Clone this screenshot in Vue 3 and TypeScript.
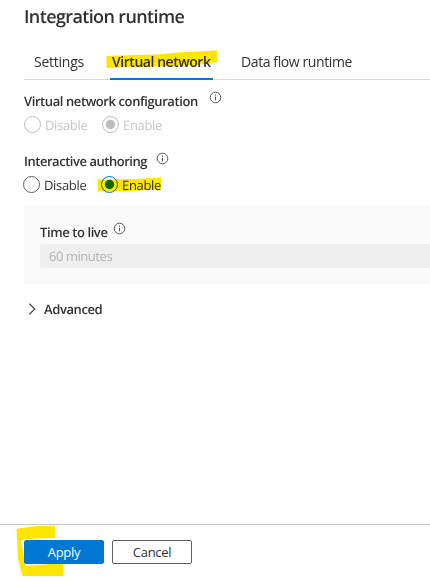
<script setup lang="ts">
import { ref } from 'vue'

interface Choice {
  label: string
  checked: boolean
  marked?: boolean
}
interface Group {
  title: string
  kind: string
  disabled: boolean
  choices: Choice[]
}

const tabs = [
  { label: 'Settings', kind: 'settings' },
  { label: 'Virtual network', kind: 'network' },
  { label: 'Data flow runtime', kind: 'dataflow' },
]
const activeTab = ref('network')

const groups: Group[] = [
  {
    title: 'Virtual network configuration',
    kind: 'config',
    disabled: true,
    choices: [
      { label: 'Disable', checked: false },
      { label: 'Enable', checked: true },
    ],
  },
  {
    title: 'Interactive authoring',
    kind: 'authoring',
    disabled: false,
    choices: [
      { label: 'Disable', checked: false },
      { label: 'Enable', checked: true, marked: true },
    ],
  },
]
</script>

<template>
  <main class="panel">
    <h1 class="title"><span>Integration runtime</span></h1>

    <nav class="tabs">
      <button
        v-for="tab in tabs"
        :key="tab.kind"
        class="tab"
        :class="[tab.kind, { active: activeTab === tab.kind }]"
        @click="activeTab = tab.kind"
      >
        <span>{{ tab.label }}</span>
        <svg v-if="tab.kind === 'network'" class="marker tab-marker" width="112" height="20" viewBox="0 0 112 20">
          <path d="M0.5 6 L30 5 L52 4.5 L75 2.2 L111 0.5 V12 L90 15 L50 16.5 L0.5 18 Z" fill="#ffe600" />
        </svg>
      </button>
    </nav>

    <section v-for="group in groups" :key="group.kind" class="group" :class="[group.kind, { disabled: group.disabled }]">
      <div class="heading">
        <span class="label">{{ group.title }}</span>
        <svg class="info" width="13" height="13" viewBox="0 0 13 13">
          <circle cx="6.5" cy="6.5" r="5.3" />
          <path d="M6.5 5.6V9.3M6.5 3.6V4.7" />
        </svg>
      </div>
      <div class="choices">
        <div v-for="choice in group.choices" :key="choice.label" class="choice" :class="choice.label.toLowerCase()">
          <svg class="radio" :class="{ checked: choice.checked }" width="18" height="18" viewBox="0 0 18 18">
            <circle class="ring" cx="9.5" cy="8.5" r="8" />
            <circle v-if="choice.checked" class="dot" cx="9.5" cy="8.5" r="4.7" />
          </svg>
          <span>{{ choice.label }}</span>
          <svg v-if="choice.marked" class="marker choice-marker" width="64" height="16" viewBox="0 0 64 16">
            <path d="M0 2.5 L38 2 L63 0.5 V12.5 L30 14 L0 14.5 Z" fill="#ffe600" />
          </svg>
        </div>
      </div>
    </section>

    <section class="live">
      <div class="heading">
        <span class="label">Time to live</span>
        <svg class="info" width="13" height="13" viewBox="0 0 13 13">
          <circle cx="6.5" cy="6.5" r="5.3" />
          <path d="M6.5 5.6V9.3M6.5 3.6V4.7" />
        </svg>
      </div>
      <div class="field"><span>60 minutes</span></div>
    </section>

    <div class="advanced">
      <svg width="8" height="12" viewBox="0 0 8 12"><path d="M1.4 0.7 L6.8 6 L1.4 11.3" /></svg>
      <span>Advanced</span>
    </div>

    <footer class="footer">
      <svg class="apply-marker" width="50" height="52" viewBox="0 0 50 52">
        <path d="M0.5 5 Q1 3.5 4 3.2 L22 1 H39 V13 L20 13.5 L5 15 L9.5 41 L47 38 V51 H6.5 L2 34 Z" fill="#ffe600" />
      </svg>
      <button class="button primary"><span>Apply</span></button>
      <button class="button"><span>Cancel</span></button>
    </footer>
  </main>
</template>

<style>
body {
  margin: 0;
  background: #fff;
  overflow: hidden;
}
</style>

<style scoped>
.panel {
  box-sizing: border-box;
  display: flex;
  flex-direction: column;
  width: 430px;
  height: 581px;
  overflow: hidden;
  color: #323130;
  background: #fff;
  font: 13px/18px "Open Sans", "Noto Sans", sans-serif;
  letter-spacing: -0.32px;
  text-rendering: geometricPrecision;
  white-space: nowrap;
}
button {
  font: inherit;
  color: inherit;
  letter-spacing: inherit;
}
.title {
  margin: 5px 0 0 24px;
  height: 23px;
  font-size: 18px;
  line-height: 24px;
  font-weight: 600;
  letter-spacing: -0.63px;
}
.tabs {
  display: flex;
  margin: 17px 0 0 24px;
  height: 34px;
  border-bottom: 1px solid #dcdcdc;
}
.tab {
  position: relative;
  box-sizing: border-box;
  display: flex;
  align-items: flex-start;
  height: 35px;
  padding: 7px 0 0;
  border: 0;
  background: none;
  font-size: 14px;
  line-height: 20px;
  letter-spacing: -0.4px;
}
.settings {
  width: 86px;
  padding-left: 10px;
  letter-spacing: -0.25px;
}
.network {
  width: 103px;
  padding-left: 2px;
}
.dataflow {
  margin-left: 28px;
}
.active {
  border-bottom: 2px solid #0078d4;
  font-weight: 600;
  letter-spacing: -0.45px;
}
.marker {
  position: absolute;
  mix-blend-mode: multiply;
}
.tab-marker {
  left: -4.5px;
  top: 5px;
}
.group {
  height: 60px;
}
.config {
  margin-top: 12px;
}
.heading {
  display: flex;
  font-weight: 600;
  letter-spacing: -0.41px;
}
.group .heading {
  height: 23px;
  padding-left: 24px;
}
.info {
  fill: none;
  stroke: #555;
  stroke-width: 1;
}
.group .info {
  margin-top: -1px;
}
.config .label {
  width: 185px;
}
.authoring .label {
  width: 132px;
  letter-spacing: -0.47px;
}
.authoring .info {
  margin-top: 0;
}
.choices {
  display: flex;
  height: 20px;
  padding-left: 23px;
}
.authoring .choices {
  padding-left: 22px;
}
.choice {
  position: relative;
  display: flex;
  width: 78px;
}
.choice span {
  padding: 1px 0 0 4px;
}
.radio {
  margin-top: 1px;
  fill: none;
  overflow: visible;
}
.ring {
  stroke: #605e5c;
}
.checked .ring {
  stroke: #0078d4;
}
.dot {
  fill: #107010;
}
.disabled .choice {
  color: #c8c6c4;
}
.disabled .ring {
  stroke: #bebbb8;
}
.disabled .dot {
  fill: #bdbdbd;
}
.choice-marker {
  left: -2px;
  top: 2px;
}
.live {
  box-sizing: border-box;
  height: 79px;
  margin: -7px 0 0 24px;
  padding: 17px 0 0 16px;
  background: #fafafa;
}
.live .heading {
  height: 22px;
}
.live .label {
  width: 73px;
  padding-top: 1px;
}
.field {
  height: 24px;
  padding-left: 9px;
  background: #efefef;
  border-radius: 2px 0 0 2px;
  color: #b5b3b1;
  line-height: 25px;
  letter-spacing: -0.45px;
}
.advanced {
  display: flex;
  align-items: center;
  gap: 8px;
  margin: 16px 0 0 28px;
  height: 18px;
  font-weight: 600;
  letter-spacing: -0.4px;
}
.advanced svg {
  fill: none;
  stroke: #484644;
  stroke-width: 1.2;
}
.footer {
  position: relative;
  box-sizing: border-box;
  display: flex;
  gap: 8px;
  height: 57px;
  margin-top: auto;
  padding: 15px 0 0 24px;
  border-top: 1px solid #c8c8c8;
}
.apply-marker {
  position: absolute;
  left: 16px;
  top: 0;
}
.button {
  position: relative;
  box-sizing: border-box;
  width: 80px;
  height: 24px;
  padding: 0;
  border: 1px solid #605e5c;
  border-radius: 2px;
  background: #fff;
  line-height: 22px;
  text-align: center;
}
.primary {
  border-color: #0078d4;
  background: #0078d4;
  color: #fff;
}
</style>
